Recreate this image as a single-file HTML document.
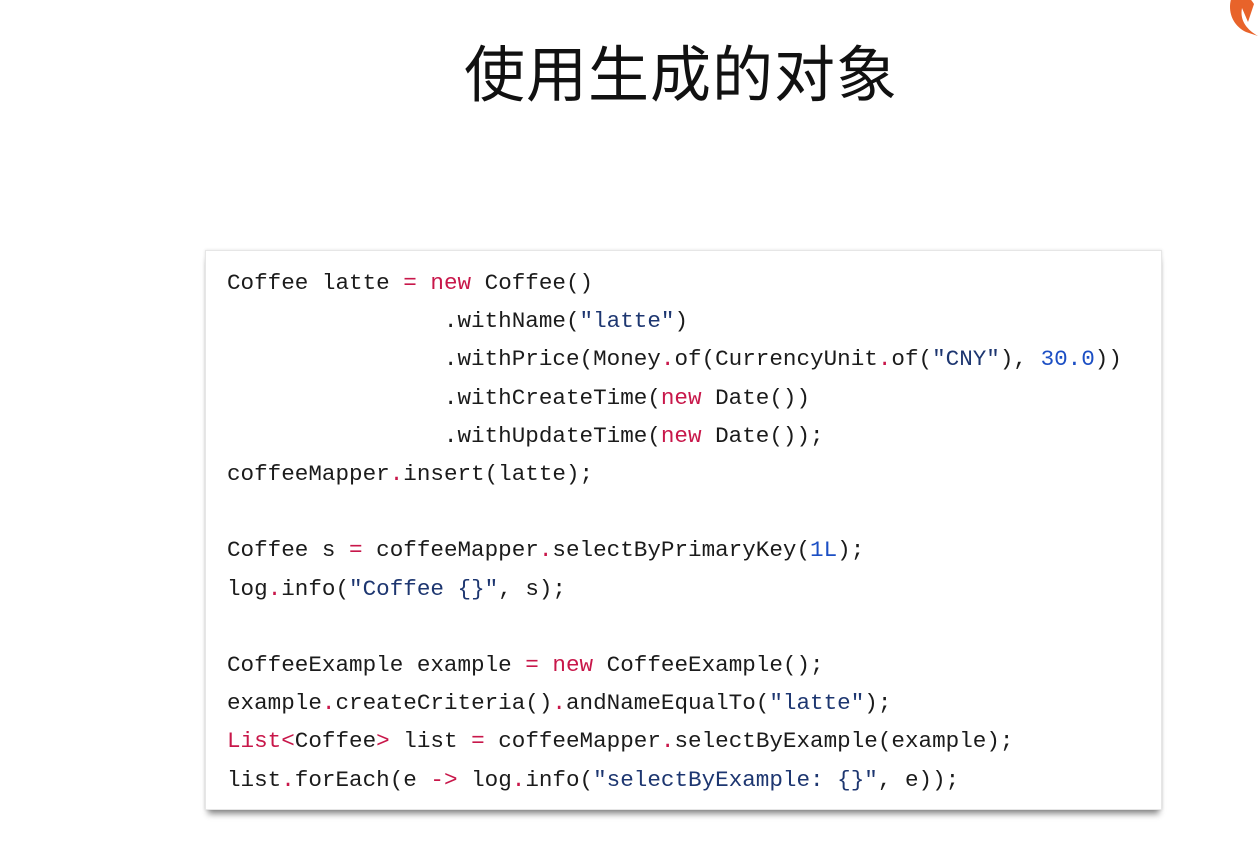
<!DOCTYPE html>
<html><head><meta charset="utf-8"><style>
html,body{margin:0;padding:0;background:#fff;width:1260px;height:854px;overflow:hidden;position:relative}
h1{position:absolute;left:0;width:1362px;top:25px;margin:0;text-align:center;font:400 61px "Liberation Sans","Noto Sans CJK SC",sans-serif;color:#111;letter-spacing:1px}
.box{position:absolute;left:205px;top:250px;width:955px;height:558px;background:#fff;border:1px solid #e6e6e6;box-shadow:0 7px 6px -3px rgba(0,0,0,.45),0 0 3px rgba(0,0,0,.12)}
pre{position:absolute;left:21px;top:13px;margin:0;font:22.6px/38.2px "Liberation Mono",monospace;color:#1b1b1b}
.k{color:#c8174a}.s{color:#1d3670}.n{color:#1c4fc4}
.logo{position:absolute;right:-8px;top:-12px;width:44px;height:54px}
</style></head><body>
<svg class="logo" viewBox="0 0 44 54"><path d="M10 4 C2 18 6 36 22 44 L34 48 C20 40 16 30 18 20 L24 34 L30 16 C26 10 22 6 18 2Z" fill="#e8632a"/></svg>
<h1>使用生成的对象</h1>
<div class="box"><pre>Coffee latte <span class="k">=</span> <span class="k">new</span> Coffee()
                .withName(<span class="s">"latte"</span>)
                .withPrice(Money<span class="k">.</span>of(CurrencyUnit<span class="k">.</span>of(<span class="s">"CNY"</span>), <span class="n">30.0</span>))
                .withCreateTime(<span class="k">new</span> Date())
                .withUpdateTime(<span class="k">new</span> Date());
coffeeMapper<span class="k">.</span>insert(latte);

Coffee s <span class="k">=</span> coffeeMapper<span class="k">.</span>selectByPrimaryKey(<span class="n">1L</span>);
log<span class="k">.</span>info(<span class="s">"Coffee {}"</span>, s);

CoffeeExample example <span class="k">=</span> <span class="k">new</span> CoffeeExample();
example<span class="k">.</span>createCriteria()<span class="k">.</span>andNameEqualTo(<span class="s">"latte"</span>);
<span class="k">List&lt;</span>Coffee<span class="k">&gt;</span> list <span class="k">=</span> coffeeMapper<span class="k">.</span>selectByExample(example);
list<span class="k">.</span>forEach(e <span class="k">-&gt;</span> log<span class="k">.</span>info(<span class="s">"selectByExample: {}"</span>, e));</pre></div>
</body></html>
